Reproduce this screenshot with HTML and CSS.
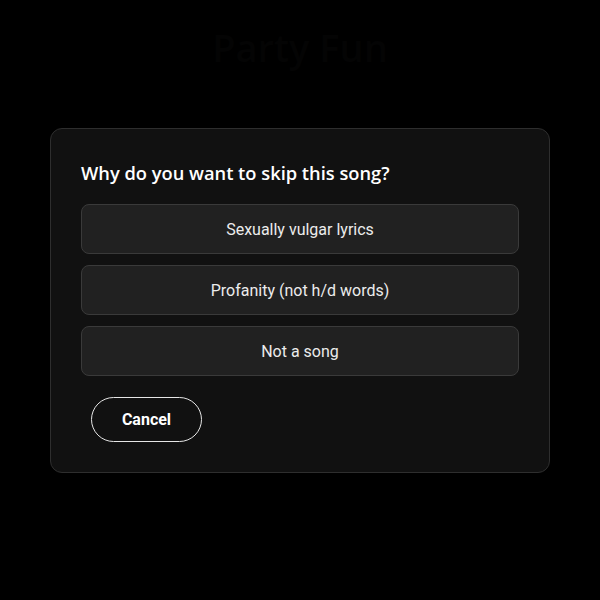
FILE: index.html
```html
<!DOCTYPE html>
<html>
<head>
<meta charset="utf-8">
<link rel="stylesheet" href="styles.css">
</head>
<body>
<div class="page">
  <div class="bg-title">Party Fun</div>
  <div class="dialog">
    <h2 class="title">Why do you want to skip this song?</h2>
    <div class="options">
      <button class="option">Sexually vulgar lyrics</button>
      <button class="option">Profanity (not h/d words)</button>
      <button class="option">Not a song</button>
    </div>
    <div class="actions">
      <button class="cancel">Cancel</button>
    </div>
  </div>
</div>
</body>
</html>
```
FILE: styles.css
```css
html, body {
  margin: 0;
  padding: 0;
  background: #000;
  width: 600px;
  height: 600px;
  overflow: hidden;
}
.page {
  position: relative;
  width: 600px;
  height: 600px;
  display: flex;
  flex-direction: column;
  align-items: center;
  font-family: Roboto, "Liberation Sans", sans-serif;
}
.bg-title {
  margin-top: 22px;
  height: 106px;
  font-family: "Open Sans", sans-serif;
  font-weight: 600;
  font-size: 38px;
  color: #040404;
  line-height: 50px;
}
.dialog {
  box-sizing: border-box;
  width: 500px;
  height: 345px;
  background: #111111;
  border: 1px solid #2e2e2e;
  border-radius: 12px;
  padding: 31px 30px 30px 30px;
  display: flex;
  flex-direction: column;
}
.title {
  margin: 0 0 18px 0;
  font-family: "Open Sans", sans-serif;
  font-weight: 600;
  font-size: 18.3px;
  line-height: 26px;
  color: #fff;
}
.options {
  display: flex;
  flex-direction: column;
  gap: 11px;
}
.option {
  box-sizing: border-box;
  height: 50px;
  width: 100%;
  background: #212121;
  border: 1px solid #3a3a3a;
  border-radius: 8px;
  color: #ececec;
  font-family: Roboto, sans-serif;
  font-size: 16px;
}
.actions {
  margin-top: 21px;
  padding-left: 10px;
}
.cancel {
  box-sizing: border-box;
  width: 111px;
  height: 45px;
  background: transparent;
  border: 1.5px solid #e6e6e6;
  border-radius: 23px;
  color: #fff;
  font-family: Roboto, sans-serif;
  font-weight: 700;
  font-size: 16px;
}
```
